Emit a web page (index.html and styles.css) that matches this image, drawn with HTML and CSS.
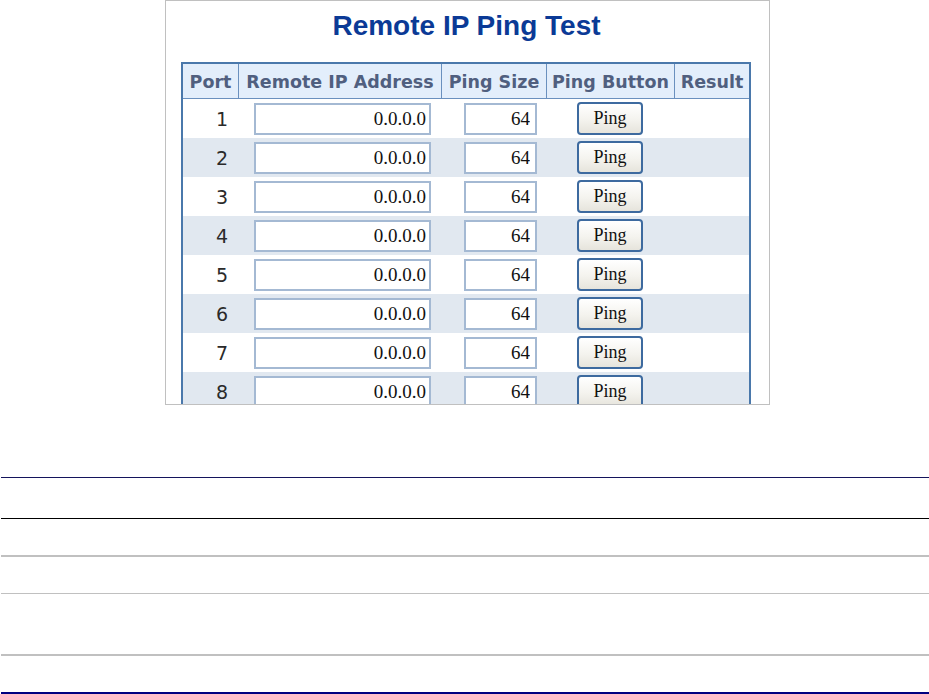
FILE: index.html
```html
<!DOCTYPE html>
<html lang="en">
<head>
<meta charset="utf-8">
<title>Remote IP Ping Test</title>
<link rel="stylesheet" href="styles.css">
</head>
<body>
<div class="shot">
  <h1 class="title">Remote IP Ping Test</h1>
  <table class="ping">
    <thead>
      <tr>
        <th class="c-port">Port</th>
        <th class="c-ip">Remote IP Address</th>
        <th class="c-size">Ping Size</th>
        <th class="c-btn">Ping Button</th>
        <th class="c-res">Result</th>
      </tr>
    </thead>
    <tbody>
      <tr><td class="port">1</td><td class="ip"><input class="in-ip" value="0.0.0.0"></td><td class="size"><input class="in-size" value="64"></td><td class="btn"><button class="ping-btn">Ping</button></td><td class="res"></td></tr>
      <tr><td class="port">2</td><td class="ip"><input class="in-ip" value="0.0.0.0"></td><td class="size"><input class="in-size" value="64"></td><td class="btn"><button class="ping-btn">Ping</button></td><td class="res"></td></tr>
      <tr><td class="port">3</td><td class="ip"><input class="in-ip" value="0.0.0.0"></td><td class="size"><input class="in-size" value="64"></td><td class="btn"><button class="ping-btn">Ping</button></td><td class="res"></td></tr>
      <tr><td class="port">4</td><td class="ip"><input class="in-ip" value="0.0.0.0"></td><td class="size"><input class="in-size" value="64"></td><td class="btn"><button class="ping-btn">Ping</button></td><td class="res"></td></tr>
      <tr><td class="port">5</td><td class="ip"><input class="in-ip" value="0.0.0.0"></td><td class="size"><input class="in-size" value="64"></td><td class="btn"><button class="ping-btn">Ping</button></td><td class="res"></td></tr>
      <tr><td class="port">6</td><td class="ip"><input class="in-ip" value="0.0.0.0"></td><td class="size"><input class="in-size" value="64"></td><td class="btn"><button class="ping-btn">Ping</button></td><td class="res"></td></tr>
      <tr><td class="port">7</td><td class="ip"><input class="in-ip" value="0.0.0.0"></td><td class="size"><input class="in-size" value="64"></td><td class="btn"><button class="ping-btn">Ping</button></td><td class="res"></td></tr>
      <tr><td class="port">8</td><td class="ip"><input class="in-ip" value="0.0.0.0"></td><td class="size"><input class="in-size" value="64"></td><td class="btn"><button class="ping-btn">Ping</button></td><td class="res"></td></tr>
    </tbody>
  </table>
</div>
<div class="rules">
  <div class="rule rule-navy1"></div>
  <div class="rule rule-black"></div>
  <div class="rule rule-gray2 gap-a"></div>
  <div class="rule rule-gray1"></div>
  <div class="rule rule-gray2 gap-b"></div>
  <div class="rule rule-navy2"></div>
</div>
</body>
</html>
```

FILE: styles.css
```css
html, body {
  margin: 0;
  padding: 0;
  background: #ffffff;
}

body {
  font-family: "Liberation Sans", Arial, sans-serif;
}

.shot {
  box-sizing: border-box;
  width: 605px;
  height: 405px;
  margin-left: 165px;
  border: 1px solid #c0c0c0;
  overflow: hidden;
  display: flex;
  flex-direction: column;
  align-items: flex-start;
}

.title {
  align-self: stretch;
  margin: 0;
  padding-top: 9px;
  padding-right: 2px;
  font-family: "Liberation Sans", Arial, sans-serif;
  font-weight: bold;
  font-size: 28px;
  line-height: 31px;
  color: #0b3a96;
  text-align: center;
}

.ping {
  box-sizing: border-box;
  margin-top: 21px;
  margin-left: 15px;
  width: 570px;
  flex-shrink: 0;
  table-layout: fixed;
  border-collapse: separate;
  border-spacing: 0;
  border: 2px solid #4a78ab;
}

.ping th {
  box-sizing: border-box;
  height: 35px;
  padding: 0;
  background: #e3eefb;
  border-right: 1px solid #6a90be;
  border-bottom: 1px solid #6a90be;
  font-family: "DejaVu Sans", Verdana, sans-serif;
  font-weight: bold;
  font-size: 17.5px;
  color: #505f7f;
  text-align: center;
  vertical-align: middle;
  white-space: nowrap;
  padding-top: 2px;
}

.ping th.c-res { border-right: none; }

.c-port { width: 56px; }
.c-ip { width: 203px; }
.c-size { width: 105px; }
.c-btn { width: 128px; }
.c-res { width: 74px; }

.ping td {
  height: 39px;
  padding: 0;
  vertical-align: middle;
}

.ping tbody tr:nth-child(even) td {
  background: #e1e8f0;
}

.ping td.port {
  text-align: right;
  padding-right: 11px;
  font-family: "DejaVu Sans", Tahoma, sans-serif;
  font-size: 19px;
  color: #2a2a2a;
}

.in-ip,
.in-size {
  display: block;
  box-sizing: border-box;
  height: 32px;
  margin: 0;
  padding: 0 3px 0 0;
  border: 2px solid #a4b9d3;
  background: #ffffff;
  font-family: "Liberation Serif", "Times New Roman", serif;
  font-size: 19px;
  color: #111111;
  text-align: right;
  outline: none;
}

.in-ip {
  width: 177px;
  margin-left: 15px;
}

.in-size {
  width: 73px;
  margin-left: 22px;
  padding-right: 5px;
}

.ping-btn {
  display: block;
  box-sizing: border-box;
  width: 66px;
  height: 33px;
  margin: 0 0 0 30px;
  padding: 0;
  border: 2px solid #3d6a9f;
  border-radius: 4px;
  background: linear-gradient(#ffffff, #f4f3ee 55%, #e6e4dc);
  font-family: "Liberation Serif", "Times New Roman", serif;
  font-size: 18px;
  color: #111111;
  cursor: pointer;
}

.rules {
  padding-left: 1px;
}

.rule {
  width: 100%;
}

.rule-navy1 {
  margin-top: 72px;
  height: 1px;
  background: #14145c;
}

.rule-black {
  margin-top: 40px;
  height: 1px;
  background: #000000;
}

.rule-gray2 {
  height: 2px;
  background: #c0c0c0;
}

.gap-a { margin-top: 36px; }
.gap-b { margin-top: 60px; }

.rule-gray1 {
  margin-top: 36px;
  height: 1px;
  background: #c0c0c0;
}

.rule-navy2 {
  margin-top: 36px;
  height: 2px;
  background: #000080;
}
```
